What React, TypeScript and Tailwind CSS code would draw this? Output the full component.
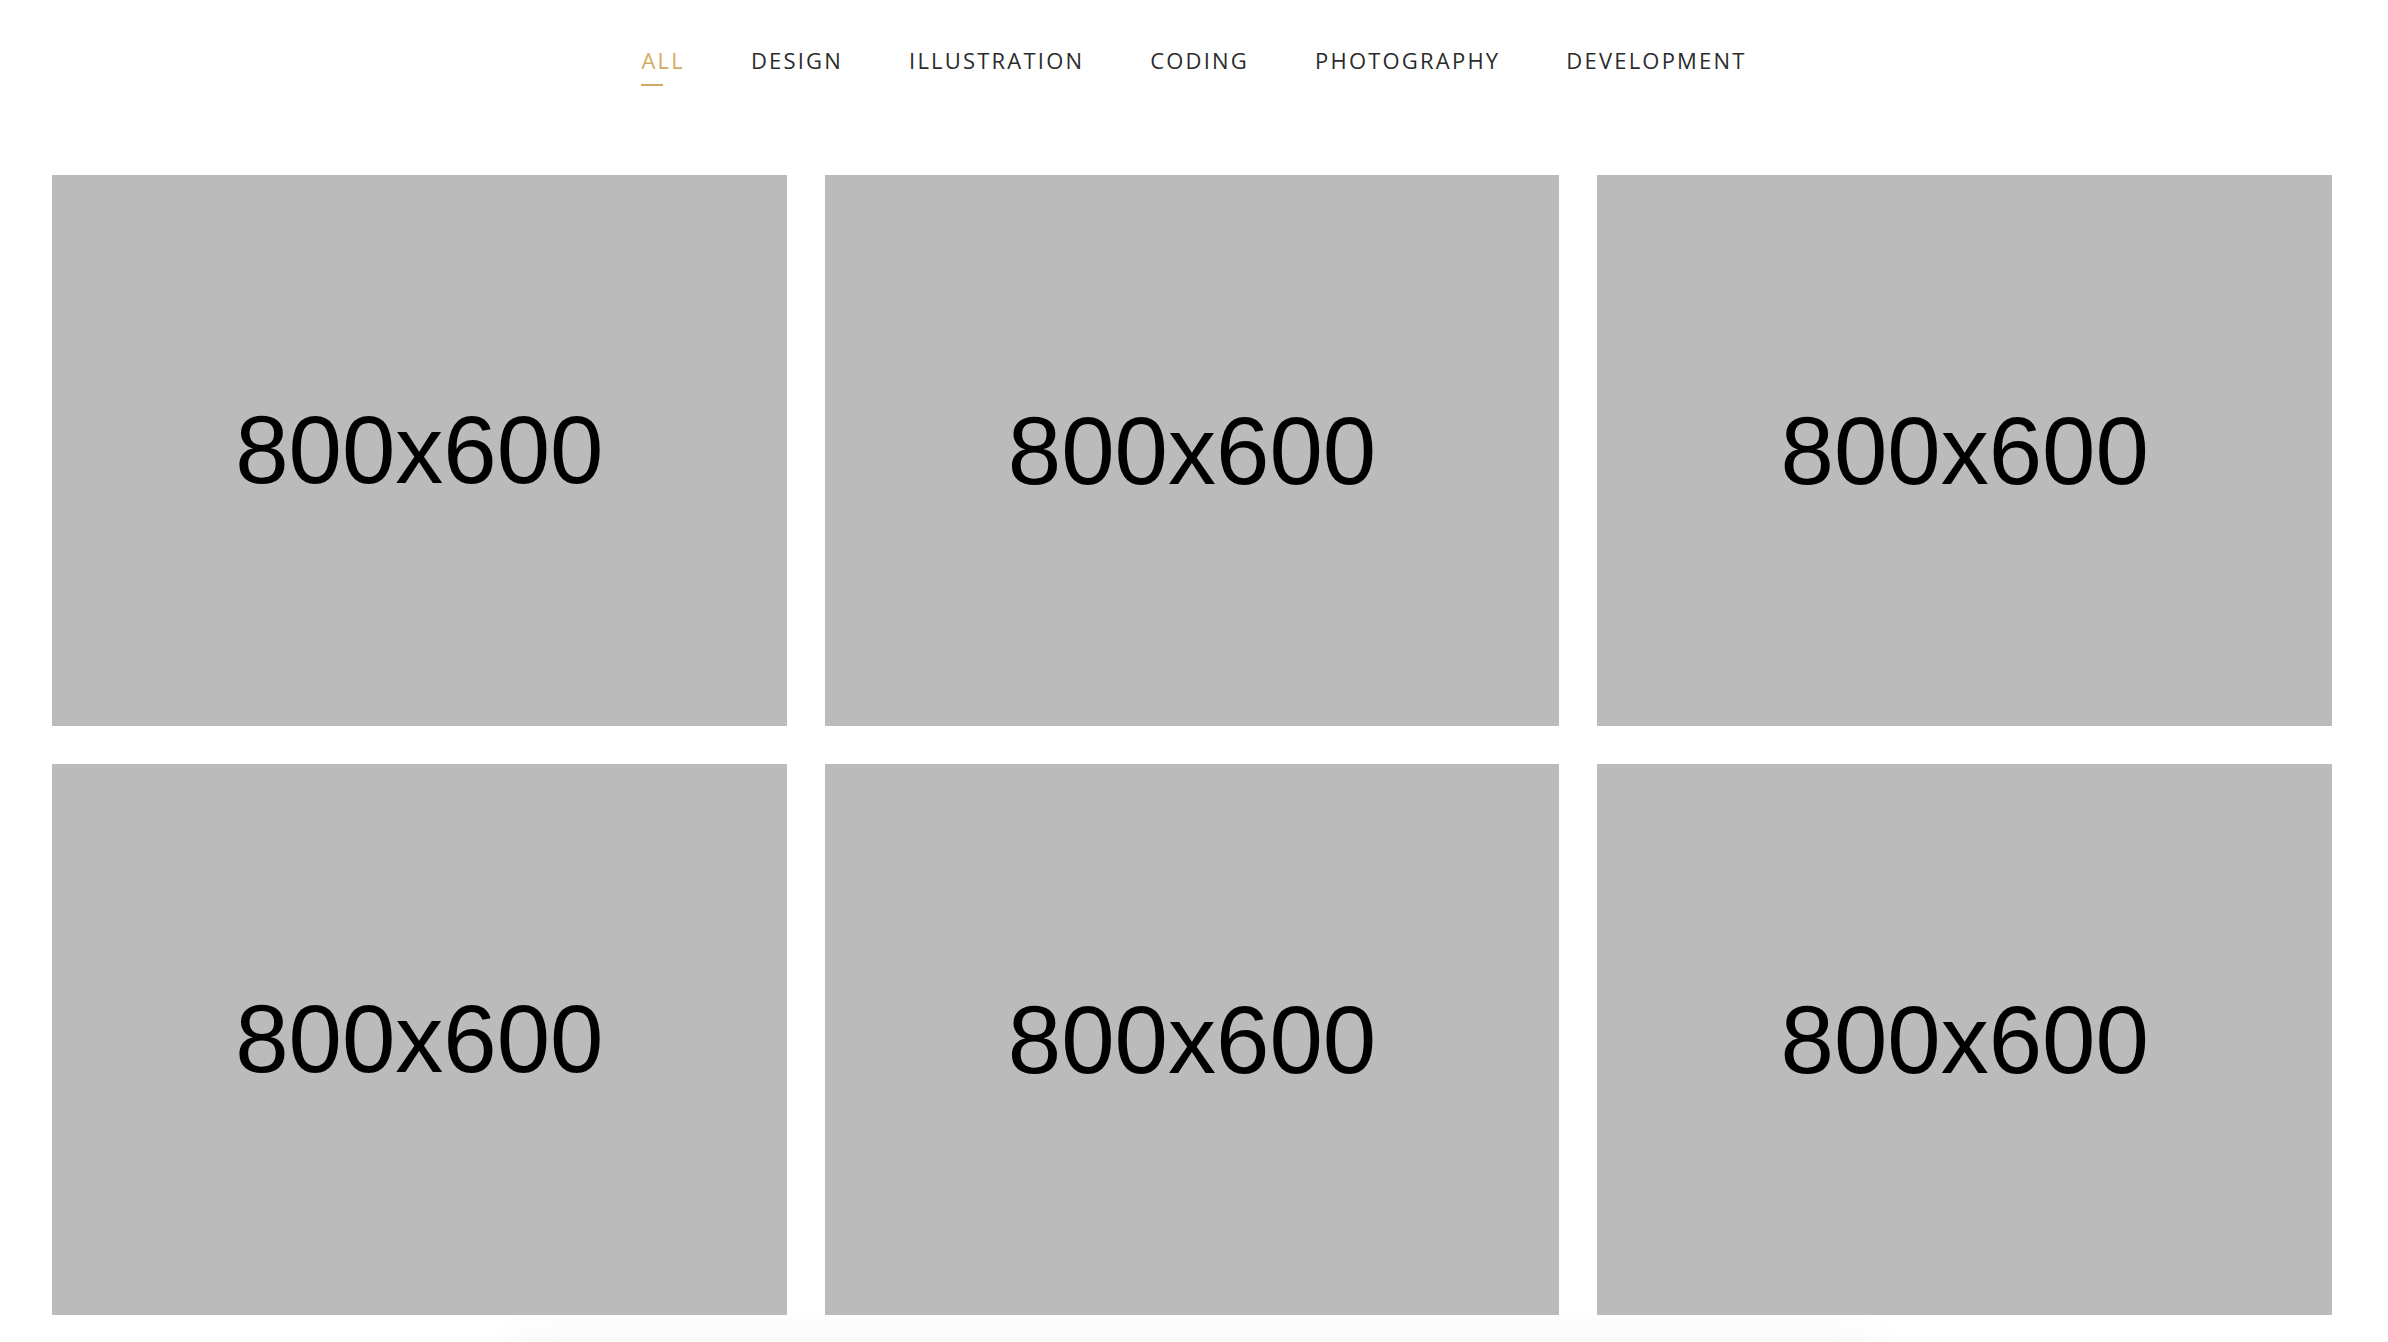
const filters = ["All", "Design", "Illustration", "Coding", "Photography", "Development"];

const PortfolioPage = () => {
  return <main className="h-screen overflow-hidden bg-white font-['Open_Sans',sans-serif]">
    <nav className="flex justify-center gap-[66px] pt-[44px]">
      {filters.map((f, i) => (
        <button
          key={f}
          className={`relative uppercase text-[22px] leading-[33px] tracking-[0.1em] ${i === 0 ? "text-[#d4aa62]" : "text-[#2b2b2b]"}`}
        >
          {f}
          {i === 0 && <span className="absolute left-0 top-[40px] h-[2px] w-[22px] bg-[#d4aa62]" />}
        </button>
      ))}
    </nav>

    <div className="mt-[98px] grid grid-cols-3 gap-[38px] pl-[52px] pr-[56px]">
      {[1, 2, 3, 4, 5, 6].map((n) => (
        <div key={n} className="flex aspect-[4/3] items-center justify-center bg-[#bbbbbb]">
          <span className="font-['Liberation_Sans',Arial,sans-serif] text-[96px] leading-none text-black">800x600</span>
        </div>
      ))}
    </div>

    <div className="mx-auto mt-[30px] h-[100px] w-[1360px] bg-white shadow-[0_0_50px_rgba(0,0,0,0.06)]" />
  </main>;
};

export default PortfolioPage;
